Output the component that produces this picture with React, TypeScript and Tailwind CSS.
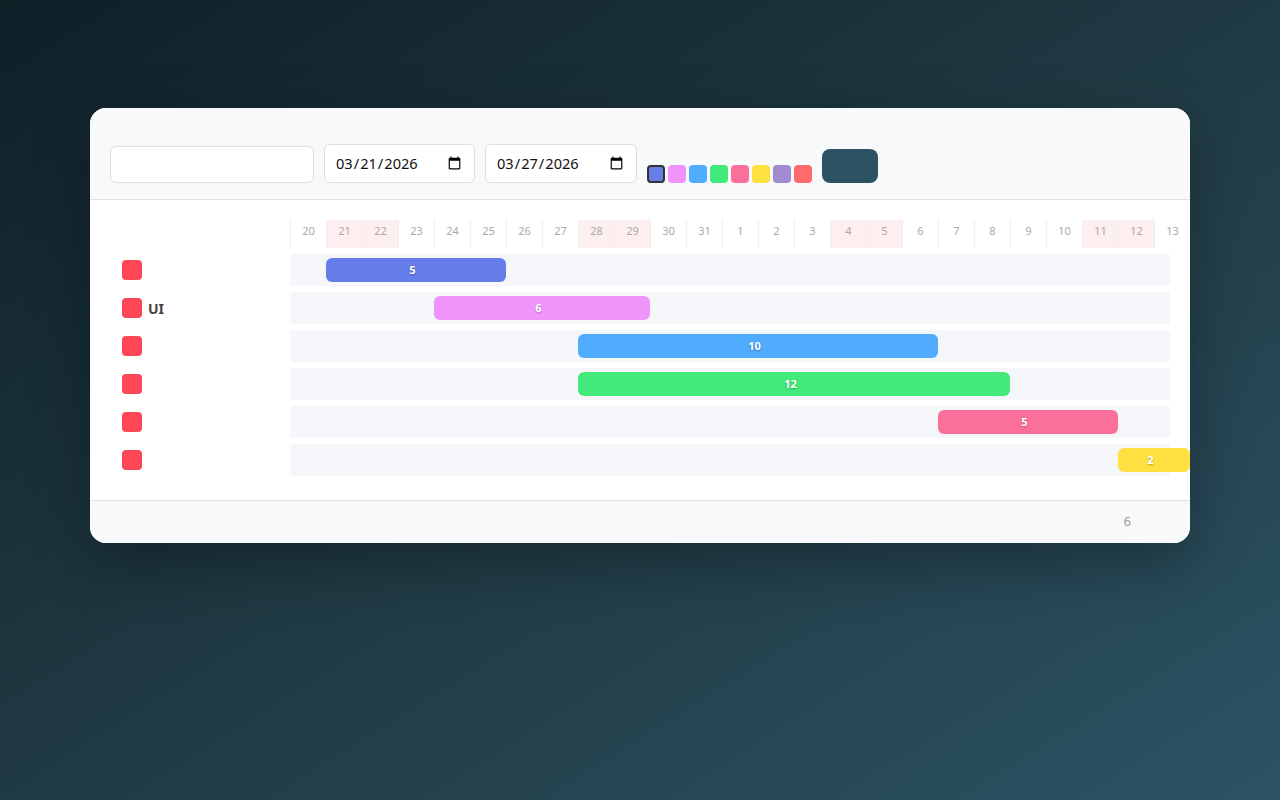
import React from "react";

const days = [20, 21, 22, 23, 24, 25, 26, 27, 28, 29, 30, 31, 1, 2, 3, 4, 5, 6, 7, 8, 9, 10, 11, 12, 13];
const weekend = new Set([1, 2, 8, 9, 15, 16, 22, 23]);
const swatches = ["#667eea", "#f093fb", "#4facfe", "#43e97b", "#fa709a", "#fee140", "#a18cd1", "#ff6b6b"];

const tasks = [
  { label: "", start: 1, len: 5, color: "#667eea" },
  { label: "UI", start: 4, len: 6, color: "#f093fb" },
  { label: "", start: 8, len: 10, color: "#4facfe" },
  { label: "", start: 8, len: 12, color: "#43e97b" },
  { label: "", start: 18, len: 5, color: "#fa709a" },
  { label: "", start: 23, len: 2, color: "#fee140" },
];

const font = { fontFamily: '"Noto Sans", "Open Sans", sans-serif' };

export default function App() {
  return (
    <div
      className="min-h-screen bg-linear-to-br from-[#0f2027] via-[#203a43] to-[#2c5364] pt-[108px]"
      style={font}
    >
      <div className="mx-auto w-[1100px] overflow-hidden rounded-2xl bg-white shadow-[0_20px_60px_rgba(0,0,0,0.3)]">
        <div className="flex items-end gap-[10px] border-b border-[#e0e0e0] bg-[#f8f9fa] px-5 pt-9 pb-4">
          <input
            type="text"
            className="h-[37px] w-[204px] rounded-md border border-[#dddddd] bg-white px-3 text-[14px] outline-none"
            style={font}
          />
          <input
            type="date"
            defaultValue="2026-03-21"
            className="h-[39px] w-[151px] rounded-md border border-[#dddddd] bg-white px-[10px] text-[14.6px] text-[#111] outline-none"
            style={font}
          />
          <input
            type="date"
            defaultValue="2026-03-27"
            className="h-[39px] w-[152px] rounded-md border border-[#dddddd] bg-white px-[10px] text-[14.6px] text-[#111] outline-none"
            style={font}
          />
          <div className="flex gap-[3px]">
            {swatches.map((c, i) => (
              <div
                key={c}
                className={
                  "h-[18px] w-[18px] rounded-[4px] " +
                  (i === 0 ? "border-2 border-[#333333]" : "")
                }
                style={{ backgroundColor: c }}
              />
            ))}
          </div>
          <button className="h-[34px] w-[56px] rounded-lg bg-[#2c5364]" />
        </div>

        <div className="px-5 pt-5 pb-6">
          <div className="flex">
            <div className="w-[180px] shrink-0" />
            <div className="flex">
              {days.map((d, i) => (
                <div
                  key={i}
                  className={
                    "h-[28px] w-[36px] shrink-0 border-l border-[#eeeeee] pt-[3px] text-center text-[11px] leading-[16px] text-[#aaaaaa] " +
                    (weekend.has(i) ? "bg-[#fdeef0]" : "")
                  }
                >
                  {d}
                </div>
              ))}
            </div>
          </div>
          {tasks.map((t, i) => (
            <div key={i} className="mt-[6px] flex h-[32px] items-center">
              <div className="flex w-[180px] shrink-0 items-center gap-[6px] pl-3">
                <div className="h-5 w-5 rounded-[4px] bg-[#ff4757]" />
                <span className="text-[14px] font-bold text-[#444444]">{t.label}</span>
              </div>
              <div className="relative h-[32px] flex-1 rounded-[4px] bg-[#f5f6fa]">
                <div
                  className="absolute top-1 flex h-6 items-center justify-center rounded-md pr-[7px] pt-px text-[11px] font-bold text-white [text-shadow:0_1px_2px_rgba(0,0,0,0.3)]"
                  style={{ left: t.start * 36, width: t.len * 36, backgroundColor: t.color }}
                >
                  {t.len}
                </div>
              </div>
            </div>
          ))}
        </div>

        <div className="flex h-[43px] items-center justify-end border-t border-[#e0e0e0] bg-[#f8f9fa] pr-[59px] text-[13px] text-[#999999]">
          6
        </div>
      </div>
    </div>
  );
}
